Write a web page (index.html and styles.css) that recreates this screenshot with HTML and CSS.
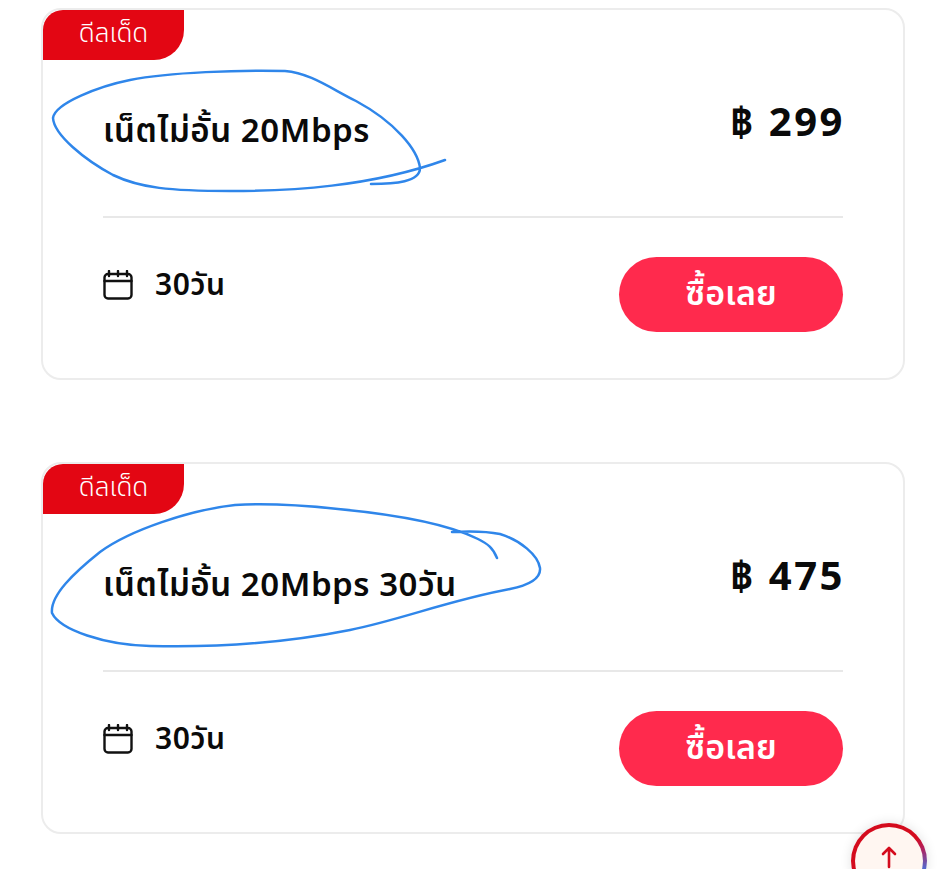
FILE: index.html
```html
<!DOCTYPE html>
<html lang="th">
<head>
<meta charset="utf-8">
<title>แพ็กเกจ</title>
<link rel="stylesheet" href="styles.css">
</head>
<body>
<main class="list">
  <article class="card">
    <div class="badge">ดีลเด็ด</div>
    <div class="head">
      <h2 class="title">เน็ตไม่อั้น 20Mbps</h2>
      <p class="price">฿ 299</p>
    </div>
    <div class="foot">
      <div class="period">
        <svg class="cal" viewBox="0 0 30 30" width="30" height="30" fill="none" stroke="#111" stroke-width="2.4" stroke-linecap="round" stroke-linejoin="round"><rect x="1.5" y="4" width="27" height="24.5" rx="3.5"/><path d="M1.5 11h27M6 1v5M15 1v5M24 1v5"/></svg>
        <span>30วัน</span>
      </div>
      <button class="buy">ซื้อเลย</button>
    </div>
  </article>
  <article class="card">
    <div class="badge">ดีลเด็ด</div>
    <div class="head">
      <h2 class="title">เน็ตไม่อั้น 20Mbps 30วัน</h2>
      <p class="price">฿ 475</p>
    </div>
    <div class="foot">
      <div class="period">
        <svg class="cal" viewBox="0 0 30 30" width="30" height="30" fill="none" stroke="#111" stroke-width="2.4" stroke-linecap="round" stroke-linejoin="round"><rect x="1.5" y="4" width="27" height="24.5" rx="3.5"/><path d="M1.5 11h27M6 1v5M15 1v5M24 1v5"/></svg>
        <span>30วัน</span>
      </div>
      <button class="buy">ซื้อเลย</button>
    </div>
  </article>
</main>
<svg class="scribble" viewBox="0 0 946 869" width="946" height="869" fill="none" stroke="#2f86ea" stroke-width="2.5" stroke-linecap="round" stroke-linejoin="round">
  <path d="M371 184C395 184 420 182 420 168C418 150 395 122 356 101C330 88 310 73 285 71C240 70 170 72 130 80C100 86 55 103 53 118C54 135 85 160 113 175C140 188 170 191 230 191C290 191 370 187 445 160"/>
  <path d="M497 558C493 548 488 544 478 539C450 525 400 515 338 509C300 505 270 503 235 505C190 510 130 530 100 552C75 572 50 595 52 613C60 630 105 645 150 646C230 648 300 640 350 630C400 620 450 600 510 589C530 585 541 578 540 568C538 555 520 540 500 534C485 531 470 531 452 532"/>
</svg>
<a class="top" href="#" aria-label="กลับขึ้นด้านบน">
  <svg viewBox="0 0 24 24" width="24" height="24" fill="none" stroke="#d40b1d" stroke-width="2.6" stroke-linecap="round" stroke-linejoin="round"><path d="M12 22V3M6 9l6-6 6 6"/></svg>
</a>
</body>
</html>
```
FILE: styles.css
```css
* { box-sizing: border-box; }
html, body { height: 100%; }
body {
  margin: 0;
  padding: 8px 41px 0;
  background: #fff;
  color: #0a0a0a;
  font-family: "Noto Sans Thai", "Noto Sans", "Noto Sans Thai UI", "Liberation Sans", sans-serif;
  overflow: hidden;
}
.list { display: flex; flex-direction: column; gap: 82px; }
.card {
  height: 372px;
  border: 2px solid #ececec;
  border-radius: 20px;
  background: #fff;
  display: flex;
  flex-direction: column;
  align-items: stretch;
}
.badge {
  width: 141px;
  height: 50px;
  background: #e30613;
  color: #fff;
  border-radius: 20px 0 30px 0;
  font-size: 26px;
  font-weight: 300;
  line-height: 49px;
  text-align: center;
  flex: none;
}
.head {
  margin: 0 60px;
  height: 158px;
  border-bottom: 2px solid #e8e8e8;
  display: flex;
  justify-content: space-between;
  align-items: flex-start;
}
.title {
  margin: 50px 0 0;
  font-size: 33px;
  line-height: 44px;
  font-weight: 600;
  letter-spacing: .55px;
}
.price {
  margin: 38px -2px 0 0;
  font-size: 40px;
  line-height: 52px;
  font-weight: 700;
  letter-spacing: 2.5px;
}
.foot {
  margin: 39px 60px 0 60px;
  display: flex;
  justify-content: space-between;
  align-items: flex-start;
}
.period {
  display: flex;
  align-items: center;
  gap: 22px;
  margin-top: 9px;
  font-size: 30px;
  line-height: 40px;
  font-weight: 600;
  letter-spacing: .5px;
}
.cal { flex: none; margin-top: -2px; }
.buy {
  width: 224px;
  height: 75px;
  border: 0;
  border-radius: 38px;
  background: #ff2a4d;
  color: #fff;
  font: inherit;
  font-size: 34px;
  font-weight: 600;
}
.scribble { position: absolute; left: 0; top: 0; pointer-events: none; }
.top {
  position: fixed;
  left: 851px;
  top: 823px;
  width: 76px;
  height: 76px;
  border-radius: 50%;
  padding: 4px;
  background: conic-gradient(from 0deg, #d40b1d 0 50deg, #b0205e 70deg, #4a6fd8 105deg, #d40b1d 140deg, #d40b1d 360deg);
  box-shadow: 0 0 12px rgba(0, 0, 0, .12);
  display: flex;
}
.top::before {
  content: "";
  position: absolute;
  inset: 4px;
  border-radius: 50%;
  background: #fff6f1;
}
.top svg { position: relative; margin: 18px auto 0; }
```
